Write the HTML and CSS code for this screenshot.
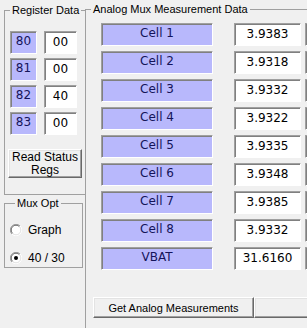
FILE: index.html
```html
<!DOCTYPE html>
<html lang="en">
<head>
    <meta charset="UTF-8">
    <meta name="viewport" content="width=device-width, initial-scale=1.0">
    <title>Analog Mux</title>
    <link rel="stylesheet" href="styles.css">
</head>
<body>
    <div class="window">
        <div class="left">
            <fieldset class="group reg">
                <legend>Register Data</legend>
                <div class="reg-rows">
                    <div class="row"><span class="tag reg-tag">80</span><span class="field reg-field">00</span></div>
                    <div class="row"><span class="tag reg-tag">81</span><span class="field reg-field">00</span></div>
                    <div class="row"><span class="tag reg-tag">82</span><span class="field reg-field">40</span></div>
                    <div class="row"><span class="tag reg-tag">83</span><span class="field reg-field">00</span></div>
                </div>
                <button class="btn read-btn">Read Status<br>Regs</button>
            </fieldset>

            <fieldset class="group mux">
                <legend>Mux Opt</legend>
                <label class="radio">
                    <svg width="12" height="12" viewBox="0 0 12 12">
                        <circle cx="6" cy="6" r="5" fill="#fff"/>
                        <path d="M1.9 10.1 A5.8 5.8 0 0 1 10.1 1.9" stroke="#a0a0a0" fill="none"/>
                        <path d="M2.6 9.4 A4.8 4.8 0 0 1 9.4 2.6" stroke="#696969" fill="none"/>
                        <path d="M10.1 1.9 A5.8 5.8 0 0 1 1.9 10.1" stroke="#fff" fill="none"/>
                        <path d="M9.4 2.6 A4.8 4.8 0 0 1 2.6 9.4" stroke="#e3e3e3" fill="none"/>
                    </svg>
                    Graph
                </label>
                <label class="radio">
                    <svg width="12" height="12" viewBox="0 0 12 12">
                        <circle cx="6" cy="6" r="5" fill="#fff"/>
                        <path d="M1.9 10.1 A5.8 5.8 0 0 1 10.1 1.9" stroke="#a0a0a0" fill="none"/>
                        <path d="M2.6 9.4 A4.8 4.8 0 0 1 9.4 2.6" stroke="#696969" fill="none"/>
                        <path d="M10.1 1.9 A5.8 5.8 0 0 1 1.9 10.1" stroke="#fff" fill="none"/>
                        <path d="M9.4 2.6 A4.8 4.8 0 0 1 2.6 9.4" stroke="#e3e3e3" fill="none"/>
                        <circle cx="6" cy="6" r="2" fill="#000"/>
                    </svg>
                    40 / 30
                </label>
            </fieldset>
        </div>

        <fieldset class="group analog">
            <legend>Analog Mux Measurement Data</legend>
            <div class="cells" id="cells">
                <!-- rows are filled in by the script below -->
            </div>
            <div class="actions">
                <button class="btn get-btn">Get Analog Measurements</button>
                <button class="btn next-btn"></button>
            </div>
        </fieldset>
    </div>

    <script>
        const readings = [
            ["Cell 1", "3.9383"],
            ["Cell 2", "3.9318"],
            ["Cell 3", "3.9332"],
            ["Cell 4", "3.9322"],
            ["Cell 5", "3.9335"],
            ["Cell 6", "3.9348"],
            ["Cell 7", "3.9385"],
            ["Cell 8", "3.9332"],
            ["VBAT", "31.6160"]
        ];

        const cells = document.getElementById("cells");
        readings.forEach(([name, value]) => {
            const row = document.createElement("div");
            row.className = "row";
            row.innerHTML = `
                <span class="tag cell-tag">${name}</span>
                <span class="field cell-field">${value}</span>
                <span class="field cell-field"></span>
            `;
            cells.appendChild(row);
        });
    </script>
</body>
</html>
```

FILE: styles.css
```css
body {
    margin: 0;
    background-color: #f0f0f0;
    font-family: "Liberation Sans", Arial, sans-serif;
    font-size: 11px;
    color: #000;
    overflow: hidden;
}
.window {
    display: flex;
    width: 307px;
    height: 328px;
    overflow: hidden;
}
.left {
    flex: none;
    width: 81px;
    padding: 4px 0 0 4px;
}
.group {
    margin: 0;
    padding: 0;
    min-width: 0;
    border: 1px solid #a0a0a0;
}
.group legend {
    margin-left: 5px;
    padding: 0 2px;
    font-size: 11px;
    line-height: 13px;
}
.row {
    display: flex;
}

/* register data */
.reg {
    border-right: none;
    padding: 14px 0 16px 0;
}
.reg-rows {
    display: flex;
    flex-direction: column;
    gap: 4px;
    padding-left: 5px;
}
.tag, .field {
    box-sizing: border-box;
    height: 23px;
    border: 1px solid;
    border-color: #a0a0a0 #fff #fff #a0a0a0;
    box-shadow: inset 1px 1px #808080;
    font-family: "DejaVu Sans", Verdana, sans-serif;
    font-size: 12px;
    text-align: center;
}
.tag {
    background-color: #b8b8fc;
    color: #14145a;
    padding-top: 2px;
    line-height: 14px;
}
.field {
    background-color: #fff;
    line-height: 21px;
}
.reg-tag {
    width: 27px;
    margin-right: 7px;
}
.reg-field {
    width: 33px;
}

/* buttons */
.btn {
    box-sizing: border-box;
    background-color: #f0f0f0;
    border: 1px solid;
    border-color: #fff #696969 #696969 #fff;
    box-shadow: inset -1px -1px #a0a0a0, inset 1px 1px #e3e3e3;
    font-family: "Liberation Sans", Arial, sans-serif;
    font-size: 11px;
    color: #000;
    padding: 0;
}
.read-btn {
    display: block;
    width: 74px;
    height: 29px;
    margin: 14px 0 0 3px;
    font-size: 12px;
    line-height: 13px;
}

/* mux options */
.mux {
    width: 79px;
    margin-top: 2px;
    padding: 13px 0 2px 5px;
    box-sizing: border-box;
}
.radio {
    display: flex;
    align-items: center;
    gap: 6px;
    height: 14px;
    font-size: 12px;
}
.radio + .radio {
    margin-top: 14px;
}
.radio svg {
    flex: none;
}

/* analog measurements */
.analog {
    flex: none;
    width: 330px;
    height: 340px;
    margin-top: 3px;
    padding: 7px 0 0 15px;
    box-sizing: border-box;
}
.analog legend {
    margin-left: -10px;
}
.cells {
    display: flex;
    flex-direction: column;
    gap: 5px;
}
.cells .row {
    gap: 4px;
}
.cell-tag {
    width: 112px;
    margin-right: 17px;
}
.cell-field {
    width: 67px;
}
.actions {
    display: flex;
    margin: 27px 0 0 -8px;
}
.get-btn {
    width: 161px;
    height: 21px;
}
.next-btn {
    width: 100px;
    height: 21px;
}
```
